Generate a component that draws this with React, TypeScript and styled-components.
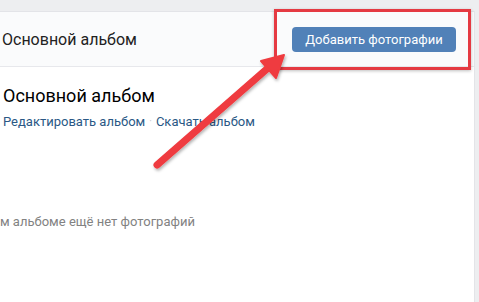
import styled, { createGlobalStyle } from 'styled-components';

const GlobalStyle = createGlobalStyle`
  html, body {
    margin: 0;
    padding: 0;
    background: #edeef0;
    font-family: Roboto, "Open Sans", "Liberation Sans", sans-serif;
    -webkit-font-smoothing: antialiased;
  }
`;

const Page = styled.div`
  position: relative;
  width: 479px;
  height: 302px;
  overflow: hidden;
  padding-top: 11px;
  box-sizing: border-box;
`;

const Card = styled.div`
  width: 475px;
  height: 291px;
  background: #fff;
  border-top: 1px solid #e3e4e8;
  border-right: 1px solid #e3e4e8;
  box-sizing: border-box;
`;

const Header = styled.div`
  height: 55px;
  display: flex;
  align-items: center;
  justify-content: space-between;
  padding: 0 4px 0 2px;
  background: #fafbfc;
  border-bottom: 1px solid #e7e8ec;
  box-sizing: border-box;
`;

const HeaderTitle = styled.div`
  font-size: 16px;
  color: #222;
  margin-top: 1px;
`;

const Highlight = styled.div`
  position: relative;
  padding: 8px 14px 14px 17px;
  margin-top: 4px;
  &::after {
    content: '';
    position: absolute;
    left: -1px;
    top: -7px;
    right: -1px;
    bottom: -4px;
    border: 3px solid #e53a42;
    box-shadow: 0 1px 3px rgba(0, 0, 0, 0.25);
    pointer-events: none;
  }
`;

const Button = styled.button`
  height: 25px;
  width: 164px;
  border: 0;
  border-radius: 4px;
  background: #5181b8;
  color: #fff;
  font-family: inherit;
  font-size: 13px;
  padding: 0;
  margin-top: 3px;
`;

const Body = styled.div`
  padding: 18px 0 0 3px;
`;

const AlbumTitle = styled.h2`
  margin: 0;
  font-weight: 400;
  font-size: 18px;
  color: #000;
  line-height: 22px;
`;

const Links = styled.div`
  display: flex;
  align-items: center;
  gap: 4px;
  margin-top: 7px;
  font-size: 13px;
  line-height: 16px;
`;

const Link = styled.a`
  color: #2a5885;
  text-decoration: none;
`;

const Dot = styled.span`
  color: #c5c8cd;
  font-size: 10px;
`;

const Empty = styled.div`
  margin: 84px 0 0 -3px;
  font-size: 13px;
  color: #828282;
`;

const Arrow = styled.svg`
  position: absolute;
  left: 0;
  top: 0;
  pointer-events: none;
`;

export default function App() {
  return (
    <>
      <GlobalStyle />
      <Page>
        <Card>
          <Header>
            <HeaderTitle>Основной альбом</HeaderTitle>
            <Highlight>
              <Button>Добавить фотографии</Button>
            </Highlight>
          </Header>
          <Body>
            <AlbumTitle>Основной альбом</AlbumTitle>
            <Links>
              <Link href="#">Редактировать альбом</Link>
              <Dot>·</Dot>
              <Link href="#">Скачать альбом</Link>
            </Links>
            <Empty>м альбоме ещё нет фотографий</Empty>
          </Body>
        </Card>
        <Arrow width="479" height="302" viewBox="0 0 479 302">
          <defs>
            <filter id="sh" x="-20%" y="-20%" width="140%" height="140%">
              <feDropShadow dx="1" dy="2" stdDeviation="1.5" floodColor="#000" floodOpacity="0.3" />
            </filter>
          </defs>
          <g filter="url(#sh)" fill="#ef3b3f" stroke="#ef3b3f">
            <line x1="157" y1="165" x2="268" y2="68" strokeWidth="7" strokeLinecap="round" />
            <polygon points="284,55 261,61 276,78" strokeWidth="2" strokeLinejoin="round" />
          </g>
        </Arrow>
      </Page>
    </>
  );
}
